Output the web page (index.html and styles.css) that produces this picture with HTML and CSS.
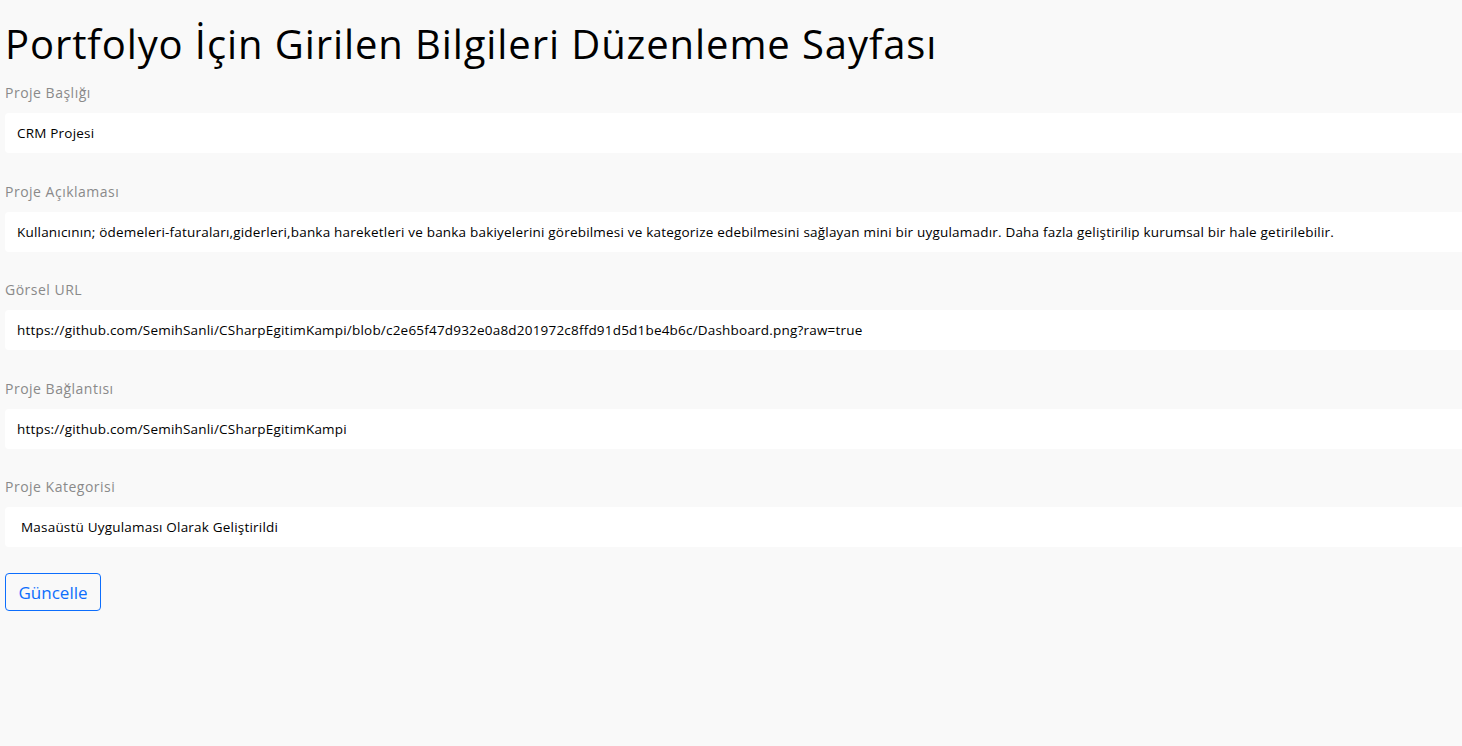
FILE: index.html
```html
<!DOCTYPE html>
<html lang="tr">
<head>
<meta charset="utf-8">
<title>Portfolyo Düzenleme</title>
<link rel="stylesheet" href="styles.css">
</head>
<body>
<main class="page">
  <h1 class="title">Portfolyo İçin Girilen Bilgileri Düzenleme Sayfası</h1>
  <form class="form">
    <div class="group">
      <label class="label">Proje Başlığı</label>
      <input class="field" type="text" value="CRM Projesi">
    </div>
    <div class="group">
      <label class="label">Proje Açıklaması</label>
      <input class="field" type="text" value="Kullanıcının; ödemeleri-faturaları,giderleri,banka hareketleri ve banka bakiyelerini görebilmesi ve kategorize edebilmesini sağlayan mini bir uygulamadır. Daha fazla geliştirilip kurumsal bir hale getirilebilir.">
    </div>
    <div class="group">
      <label class="label">Görsel URL</label>
      <input class="field" type="text" value="https://github.com/SemihSanli/CSharpEgitimKampi/blob/c2e65f47d932e0a8d201972c8ffd91d5d1be4b6c/Dashboard.png?raw=true">
    </div>
    <div class="group">
      <label class="label">Proje Bağlantısı</label>
      <input class="field" type="text" value="https://github.com/SemihSanli/CSharpEgitimKampi">
    </div>
    <div class="group">
      <label class="label">Proje Kategorisi</label>
      <div class="field select">Masaüstü Uygulaması Olarak Geliştirildi</div>
    </div>
    <button class="btn" type="button">Güncelle</button>
  </form>
</main>
</body>
</html>
```
FILE: styles.css
```css
html, body {
  margin: 0;
  padding: 0;
  background: #f9f9f9;
}
body {
  font-family: "Open Sans", "Liberation Sans", sans-serif;
  color: #000;
}
.page {
  padding: 0 0 0 5px;
}
.title {
  margin: 0;
  padding-top: 17px;
  font-size: 40px;
  letter-spacing: 0.9px;
  font-weight: 400;
  line-height: 54px;
  color: #000;
}
.form {
  display: flex;
  flex-direction: column;
  align-items: flex-start;
  margin-top: 11px;
}
.group {
  width: 100%;
  display: flex;
  flex-direction: column;
  margin-bottom: 27.5px;
}
.label {
  font-size: 14px;
  letter-spacing: 0.5px;
  line-height: 21px;
  color: #8a8a8a;
  margin-bottom: 10px;
}
.field {
  box-sizing: border-box;
  width: 100%;
  height: 40px;
  border: none;
  border-radius: 4px 0 0 4px;
  background: #fff;
  padding: 0 12px;
  font-family: inherit;
  font-size: 13.5px;
  letter-spacing: 0.2px;
  color: #000;
  outline: none;
}
.select {
  display: flex;
  align-items: center;
  padding-left: 16px;
}
.btn {
  margin-top: -1.5px;
  box-sizing: border-box;
  width: 96px;
  height: 38px;
  border: 1px solid #0d6efd;
  border-radius: 4px;
  background: transparent;
  color: #0d6efd;
  font-family: inherit;
  font-size: 17px;
  padding: 0;
}
```
